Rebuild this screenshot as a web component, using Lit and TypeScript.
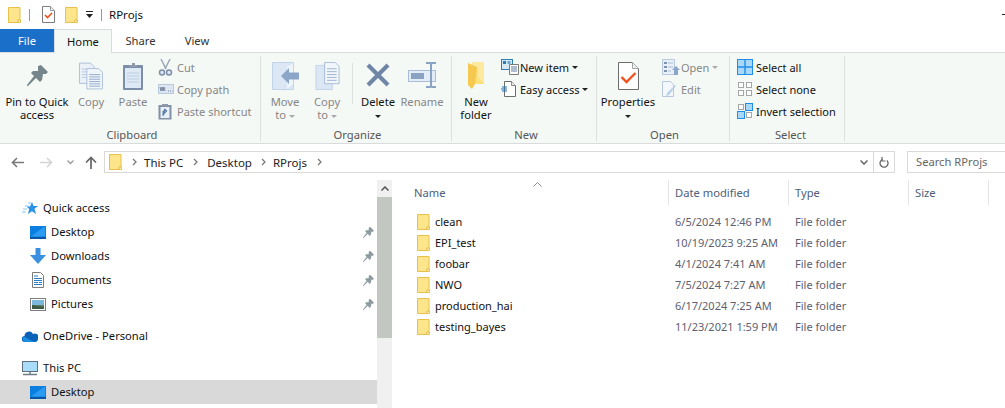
import { LitElement, html, css } from 'lit';
import { customElement } from 'lit/decorators.js';

// icons, drawn on the pixel sizes used in the ribbon
const folderPlain = (w = 13, h = 16) => html`<svg width=${w} height=${h} viewBox="0 0 13 16">
  <path d="M.5.5h11.5v12.5h-2v2.5H.5z" fill="#fde58c" stroke="#e8c04c"/>
  <path d="M10 13h2.500v2.500H10z" fill="#fff3c0" stroke="#e8c04c"/>
</svg>`;

const propsSmall = html`<svg width="13" height="17" viewBox="0 0 13 17">
  <path d="M.5.5h8l4 4v12H.5z" fill="#fff" stroke="#7d7d7d"/>
  <path d="M8.500.5v4h4" fill="#eee" stroke="#9a9a9a"/>
  <path d="M3 9l2.500 2.500L10 7" fill="none" stroke="#e8501a" stroke-width="1.600"/>
</svg>`;

const pinShape = (fill: string, size: number) => html`<svg width=${size} height=${size} viewBox="0 0 21 21">
  <path d="M11 1L14 0l7 7-2 2h-3l-1 6-2 2-4-4-8 8H0v-1l7-9-3-3 2-2h5z" fill=${fill}/>
</svg>`;

const copyIcon = html`<svg width="24" height="28" viewBox="0 0 26 29">
  <path d="M.5.5h12l4 4v18H.5z" fill="#eaf1f9" stroke="#a9bdd6"/>
  <path d="M3 7h11M3 10h11M3 13h11M3 16h11" stroke="#b9c9dd"/>
  <path d="M8.500 6.500h13l4 4v18h-17z" fill="#f1f6fb" stroke="#a9bdd6"/>
  <path d="M11 13h12M11 15.500h12M11 18h12M11 20.500h12M11 23h12M11 25.500h12" stroke="#8ea6c6"/>
</svg>`;

const pasteIcon = html`<svg width="22" height="29" viewBox="0 0 22 29">
  <rect x="1" y="3" width="20" height="25" rx="1" fill="#7d8ea8"/>
  <rect x="3" y="6" width="16" height="20" fill="#dfe9f5"/>
  <path d="M5 11h12M5 14h12M5 17h12M5 20h12" stroke="#bccde2"/>
  <path d="M7 5V3h3V1h3v2h2v2z" fill="#8f9aac"/>
</svg>`;

const cutIcon = html`<svg width="15" height="17" viewBox="0 0 15 17">
  <path d="M3 0l5 10M12 0L7 10" stroke="#9aa6b6" stroke-width="1.500" fill="none"/>
  <circle cx="4" cy="13.500" r="2.500" fill="#dfe9f5" stroke="#7d8ea8" stroke-width="1.500"/>
  <circle cx="11" cy="13.500" r="2.500" fill="#dfe9f5" stroke="#7d8ea8" stroke-width="1.500"/>
</svg>`;

const copyPathIcon = html`<svg width="16" height="10" viewBox="0 0 16 10">
  <rect x=".5" y=".5" width="15" height="9" fill="#dde7f3" stroke="#b9c9dd"/>
  <path d="M2 3l1 4 1-4 1 4 1-4 1 4M10 7h1M12 7h1M14 7h.5" stroke="#5f6f86" fill="none" stroke-width=".8"/>
</svg>`;

const pasteShortcutIcon = html`<svg width="14" height="17" viewBox="0 0 14 17">
  <rect x=".5" y="2" width="13" height="14.500" fill="#8391a6"/>
  <rect x="2.500" y="4" width="9" height="11" fill="#e8eff8"/>
  <path d="M4 1h6v2H4z" fill="#8f9aac"/>
  <path d="M5 13V8h4M6.500 6v4L9 8z" fill="#5f7fa8" stroke="#5f7fa8"/>
</svg>`;

const moveIcon = html`<svg width="27" height="28" viewBox="0 0 27 28">
  <path d="M.5.5h21v27H.5z" fill="#dce7f5" stroke="#c3d3e8"/>
  <path d="M21 1l-6 4v22l6-5z" fill="#eef4fb"/>
  <path d="M27 10.500H17V6L9 14l8 8v-4.500h10z" fill="#8ba6c9"/>
</svg>`;

const copyToIcon = html`<svg width="25" height="28" viewBox="0 0 25 29">
  <path d="M.5 3.500h17v25H.5z" fill="#dce7f5" stroke="#c3d3e8"/>
  <path d="M9.500.5h11l4 4v18h-15z" fill="#f1f6fb" stroke="#a9bdd6"/>
  <path d="M12 7h10M12 10h10M12 13h10M12 16h10M12 19h10" stroke="#a0b4cf"/>
</svg>`;

const deleteIcon = html`<svg width="26" height="26" viewBox="0 0 26 26">
  <path d="M3 3l20 20M23 3L3 23" stroke="#6f86a6" stroke-width="4.200" fill="none"/>
</svg>`;

const renameIcon = html`<svg width="29" height="26" viewBox="0 0 29 26">
  <rect x=".5" y="8.500" width="27" height="11" fill="#e3edf8" stroke="#a9bdd6"/>
  <rect x="3" y="11" width="13" height="6" fill="#8ba3c2"/>
  <path d="M18 1h4l1 1 1-1h4M18 25h4l1-1 1 1h4M23 2v22" stroke="#8ba3c2" stroke-width="2" fill="none"/>
</svg>`;

const newFolderIcon = html`<svg width="17" height="27" viewBox="0 0 17 27">
  <path d="M4 0h12v22H4z" fill="#fde9a0"/>
  <path d="M0 1l9 4 1 11 6 6H7l-3 5-4-4z" fill="#f5c850"/>
  <path d="M9 5l1 11 6 6H7z" fill="#fde07a"/>
</svg>`;

const newItemIcon = html`<svg width="18" height="16" viewBox="0 0 18 16">
  <rect x=".5" y=".5" width="11" height="10" fill="#d7e8f5" stroke="#2d7fb0"/>
  <rect x="2" y="2" width="3" height="3" fill="#2d7fb0"/>
  <rect x="6.500" y="2" width="3" height="3" fill="#6ea8c9"/>
  <path d="M8.500 5.500h9v10h-9z" fill="#fff" stroke="#7a7a7a"/>
  <path d="M10 8h6M10 10h6M10 12h6" stroke="#5c7da0"/>
</svg>`;

const easyAccessIcon = html`<svg width="15" height="16" viewBox="0 0 15 16">
  <path d="M3.500.5h7l4 4v11h-11z" fill="#fff" stroke="#6d6d6d"/>
  <path d="M10.500.5v4h4" fill="#eee" stroke="#8a8a8a"/>
  <path d="M1 6h5M0 8h6M1 10h5" stroke="#1f6eb4"/>
</svg>`;

const propertiesIcon = html`<svg width="21" height="28" viewBox="0 0 21 28">
  <path d="M.5.5h14l6 6v21H.5z" fill="#fff" stroke="#6d6d6d"/>
  <path d="M14.500.5v6h6" fill="#eee" stroke="#a5a5a5"/>
  <path d="M3.500 15l5 5 9-9" fill="none" stroke="#f0521b" stroke-width="2.400"/>
</svg>`;

const openIcon = html`<svg width="18" height="16" viewBox="0 0 18 16">
  <path d="M.5.5h12v15H.5z" fill="#e9f0f8" stroke="#b9c9dd"/>
  <path d="M2 3h3v2H2zM2 7h3v2H2zM2 11h3v2H2z" fill="#7d93b2"/>
  <path d="M6 4h5M6 8h5M6 12h3" stroke="#a9bdd6"/>
  <path d="M14 7l4 4h-2v5h-4v-5h-2z" fill="#8ba6c9"/>
</svg>`;

const editIcon = html`<svg width="14" height="16" viewBox="0 0 14 16">
  <path d="M.5.5h8l3 3v12h-11z" fill="#f4f8fc" stroke="#b9c9dd"/>
  <path d="M13 4l1 1-7 9-3 1 1-3z" fill="#b9d2ea"/>
</svg>`;

const selectAll = html`<svg width="16" height="16" viewBox="0 0 16 16">
  <rect x=".5" y=".5" width="15" height="15" fill="#a9d8f8" stroke="#1f8ee8"/>
  <path d="M8 0v16M0 8h16" stroke="#1f8ee8" stroke-width="1.400"/>
</svg>`;

const selectNone = html`<svg width="16" height="16" viewBox="0 0 16 16">
  <g fill="#fff" stroke="#a6a6a6"><rect x="1.500" y="1.500" width="5" height="5"/><rect x="9.500" y="1.500" width="5" height="5"/>
  <rect x="1.500" y="9.500" width="5" height="5"/><rect x="9.500" y="9.500" width="5" height="5"/></g>
</svg>`;

const selectInvert = html`<svg width="16" height="16" viewBox="0 0 16 16">
  <g fill="#fff" stroke="#a6a6a6"><rect x="1.500" y="1.500" width="5" height="5"/><rect x="9.500" y="9.500" width="5" height="5"/></g>
  <g fill="#a9d8f8" stroke="#1f8ee8"><rect x=".5" y="8.500" width="7" height="7"/><rect x="8.500" y=".5" width="7" height="7"/></g>
</svg>`;

const chevron = html`<svg width="5" height="8" viewBox="0 0 5 8"><path d="M1 1l3 3-3 3" fill="none" stroke="#7a7a7a" stroke-width="1.300"/></svg>`;

const quickAccess = html`<svg width="16" height="14" viewBox="0 0 16 14">
  <path d="M10 1l1.500 4H16l-3.500 2.800L14 13l-4-2.800L6 13l1.200-5L4.500 5.500H8z" fill="#2a93e6"/>
  <path d="M6 2h3M3 5h4M1 8h4M0 11h4" stroke="#8cc8f2"/>
</svg>`;

const desktopIcon = html`<svg width="16" height="13" viewBox="0 0 16 13">
  <rect width="16" height="11.500" fill="#0a7fe0"/>
  <path d="M1 10.500L14 1h1v9.500z" fill="#2b9cf2"/>
  <rect y="11" width="16" height="2" fill="#0759a8"/>
</svg>`;

const downloadsIcon = html`<svg width="16" height="16" viewBox="0 0 16 16">
  <path d="M5.500 0h5v7H16l-8 9-8-9h5.500z" fill="#3a8fe0"/>
</svg>`;

const documentsIcon = html`<svg width="12" height="16" viewBox="0 0 12 16">
  <path d="M.5.500h8l3 3v12H.5z" fill="#fff" stroke="#7d7d7d"/>
  <path d="M2 4h4M2 6.500h8M2 8.500h8M2 10.500h4M7 10.500h3M2 12.500h8" stroke="#2a7fc9"/>
</svg>`;

const picturesIcon = html`<svg width="16" height="13" viewBox="0 0 16 13">
  <rect x=".5" y=".5" width="15" height="12" fill="#fff" stroke="#7d7d7d"/>
  <rect x="2" y="2" width="12" height="5" fill="#7cb7e0"/>
  <rect x="2" y="7" width="12" height="4" fill="#5f7d5f"/>
  <path d="M2 7l5 1 7 1v2H2z" fill="#3d5a44"/>
</svg>`;

const oneDrive = html`<svg width="16" height="11" viewBox="0 0 16 11">
  <path d="M3 11a3 3 0 0 1-.5-6A4.500 4.500 0 0 1 11 3a3.500 3.500 0 0 1 5 4.500c0 2-1 3.500-3 3.500z" fill="#0a62b8"/>
  <path d="M3 11a3 3 0 0 1-1-5.500L8 9l5 2z" fill="#1b8fe3"/>
</svg>`;

const thisPc = html`<svg width="16" height="15" viewBox="0 0 16 15">
  <rect x=".5" y=".5" width="15" height="10" fill="#a9dcf8" stroke="#5c7080"/>
  <path d="M7 11h2v2H7z" fill="#8a9aa6"/>
  <path d="M1 13.500h14" stroke="#6d7d88" stroke-width="1.500"/>
</svg>`;

@customElement('app-root')
export class AppRoot extends LitElement {
  static styles = css`
    :host {
      display: block;
      width: 1005px;
      height: 408px;
      overflow: hidden;
      background: #fff;
      font-family: 'Noto Sans', sans-serif;
      font-size: 11.2px;
      color: #111;
    }
    svg { display: block; flex: none; }

    .titlebar { display: flex; align-items: center; height: 29px; padding-left: 8px; }
    .titlebar .bar { width: 1px; height: 12px; background: #9a9a9a; }
    .titlebar .title { font-size: 11.5px; }
    .dash { width: 3px; height: 1px; margin-left: auto; background: #222; }
    .drop { width: 7px; height: 7px; display: block; }
    .sp { width: 10px; }

    .tabs { display: flex; height: 24px; position: relative; }
    .tab { display: flex; align-items: center; justify-content: center; height: 23px; color: #333; }
    .tab.file-tab { width: 54px; background: #1a6fc9; color: #fff; }
    .tab.home { width: 58px; height: 24px; box-sizing: border-box; background: #f5f9f6; border: 1px solid #dadbdc; border-bottom: none; position: relative; z-index: 1; color: #111; }
    .tab.share { width: 57px; }
    .tab.view { width: 56px; }

    .ribbon { display: flex; height: 92px; box-sizing: border-box; background: #f5f9f6; border-top: 1px solid #dadbdc; border-bottom: 1px solid #dadbdc; margin-top: -1px; }
    .group { display: flex; flex-direction: column; box-sizing: border-box; border-right: 1px solid #dde1de; margin: 3px 0 2px; }
    .group .content { display: flex; flex: 1; }
    .group .label { text-align: center; height: 13px; line-height: 13px; color: #555; }
    .big { display: flex; flex-direction: column; align-items: center; line-height: 13px; text-align: center; color: #111; }
    .big .ic { height: 33px; margin-top: 6px; display: flex; align-items: flex-start; justify-content: center; }
    .big .ic.pinned { padding-top: 3px; height: 30px; }
    .big.off { color: #868686; }
    .col { display: flex; flex-direction: column; }
    .small { display: flex; align-items: center; height: 22px; white-space: nowrap; color: #111; font-size: 11px; }
    .small.off { color: #868686; }
    .small .sic { width: 19px; display: flex; align-items: center; }
    .caret { display: inline-block; width: 0; height: 0; border: 3px solid transparent; border-top: 3px solid #222; border-bottom: none; vertical-align: middle; }
    .caret.off-c { border-top-color: #aaa; }
    .vsep { width: 1px; background: #dde1de; margin: 7px 4px 24px 4px; }

    .navbar { display: flex; align-items: center; height: 22px; margin-top: 7px; }
    .arrows { display: flex; align-items: center; width: 104px; flex: none; }
    .address { display: flex; align-items: center; width: 791px; height: 22px; box-sizing: border-box; border: 1px solid #d9d9d9; }
    .crumb { color: #222; font-size: 11.5px; }
    .address .end { margin-left: auto; display: flex; align-items: center; height: 100%; }
    .address .refresh { width: 20px; height: 100%; border-left: 1px solid #d9d9d9; display: flex; align-items: center; justify-content: center; }
    .search { flex: 1; margin-left: 12px; height: 22px; box-sizing: border-box; border: 1px solid #d9d9d9; border-right: none; padding-left: 8px; line-height: 19px; color: #666; }

    .body { display: flex; margin-top: 7px; height: 228px; }
    .nav { width: 377px; flex: none; padding-top: 16px; box-sizing: border-box; }
    .row { display: flex; align-items: center; height: 24px; }
    .row .nic { width: 16px; margin-right: 5px; display: flex; justify-content: center; }
    .row .txt { margin-bottom: 2px; }
    .row.l1 { padding-left: 22px; }
    .row.l2 { padding-left: 30px; }
    .row.gap { margin-top: 8px; }
    .row .pin { margin-left: auto; margin-right: 3px; }
    .row.sel { background: #d9d9d9; }

    .scroll { width: 15px; flex: none; background: #f0f0f0; display: flex; flex-direction: column; }
    .scroll .up { height: 17px; display: flex; align-items: center; justify-content: center; }
    .scroll .thumb { height: 141px; background: #c2c7c2; }

    .list { flex: 1; position: relative; }
    .sort { position: absolute; left: 141px; top: 2px; }
    .head { display: grid; grid-template-columns: 277px 120px 120px 80px; height: 25px; margin-bottom: 6px; }
    .head div { border-right: 1px solid #e5e5e5; color: #4c607a; line-height: 25px; padding-left: 6px; }
    .head div:first-child { padding-left: 22px; }
    .file-row { display: grid; grid-template-columns: 277px 120px 120px; height: 21px; align-items: center; font-size: 11px; }
    .file-row .fname { display: flex; align-items: center; padding-left: 25px; color: #111; }
    .file-row .fname svg { margin-right: 5px; }
    .file-row .meta { padding-left: 6px; color: #606070; }
  `;

  private folders = [
    ['clean', '6/5/2024 12:46 PM'],
    ['EPI_test', '10/19/2023 9:25 AM'],
    ['foobar', '4/1/2024 7:41 AM'],
    ['NWO', '7/5/2024 7:27 AM'],
    ['production_hai', '6/17/2024 7:25 AM'],
    ['testing_bayes', '11/23/2021 1:59 PM'],
  ];

  private renderTitlebar() {
    return html`<div class="titlebar">
      ${folderPlain()}
      <span class="bar" style="margin:0 12px 0 8px"></span>
      ${propsSmall}
      <span class="sp"></span>
      ${folderPlain()}
      <svg class="drop" style="margin:0 8px 0 8px" viewBox="0 0 7 7"><path d="M0 0h7v1H0zM0 3h7L3.500 7z" fill="#222"/></svg>
      <span class="bar" style="margin-right:7px"></span>
      <span class="title">RProjs</span>
      <span class="dash"></span>
    </div>`;
  }

  private renderTabs() {
    return html`<div class="tabs">
      <div class="tab file-tab">File</div>
      <div class="tab home">Home</div>
      <div class="tab share">Share</div>
      <div class="tab view">View</div>
    </div>`;
  }

  private big(icon: unknown, label: unknown, width: number, off = false, icClass = '') {
    return html`<div class="big ${off ? 'off' : ''}" style="width:${width}px">
      <div class="ic ${icClass}">${icon}</div>
      <div>${label}</div>
    </div>`;
  }

  private small(icon: unknown, label: unknown, off = false) {
    return html`<div class="small ${off ? 'off' : ''}"><span class="sic">${icon}</span>${label}</div>`;
  }

  private renderRibbon() {
    const caret = html`<span class="caret"></span>`;
    const caretOff = html`<span class="caret off-c"></span>`;
    return html`<div class="ribbon">
      <div class="group" style="width:261px;padding-left:4px">
        <div class="content">
          ${this.big(pinShape('#75858a', 21), html`Pin to Quick<br />access`, 66, false, 'pinned')}
          ${this.big(copyIcon, 'Copy', 42, true)}
          ${this.big(pasteIcon, 'Paste', 42, true)}
          <div class="col" style="margin-left:4px">
            ${this.small(cutIcon, 'Cut', true)}
            ${this.small(copyPathIcon, 'Copy path', true)}
            ${this.small(pasteShortcutIcon, 'Paste shortcut', true)}
          </div>
        </div>
        <div class="label">Clipboard</div>
      </div>
      <div class="group" style="width:191px;padding-left:3px">
        <div class="content">
          ${this.big(moveIcon, html`Move<br />to ${caretOff}`, 42, true)}
          ${this.big(copyToIcon, html`Copy<br />to ${caretOff}`, 42, true)}
          <div class="vsep"></div>
          ${this.big(deleteIcon, html`Delete<br />${caret}`, 42)}
          ${this.big(renameIcon, 'Rename', 46, true)}
        </div>
        <div class="label">Organize</div>
      </div>
      <div class="group" style="width:145px;padding-left:4px">
        <div class="content">
          ${this.big(newFolderIcon, html`New<br />folder`, 40)}
          <div class="col" style="margin-left:5px">
            ${this.small(newItemIcon, html`New item&nbsp;${caret}`)}
            ${this.small(easyAccessIcon, html`Easy access&nbsp;${caret}`)}
          </div>
        </div>
        <div class="label">New</div>
      </div>
      <div class="group" style="width:133px;padding-left:3px">
        <div class="content">
          ${this.big(propertiesIcon, html`Properties<br />${caret}`, 56)}
          <div class="col" style="margin-left:6px">
            ${this.small(openIcon, html`Open&nbsp;${caretOff}`, true)}
            ${this.small(editIcon, 'Edit', true)}
          </div>
        </div>
        <div class="label">Open</div>
      </div>
      <div class="group" style="width:115px;padding-left:7px">
        <div class="content">
          <div class="col">
            ${this.small(selectAll, 'Select all')}
            ${this.small(selectNone, 'Select none')}
            ${this.small(selectInvert, 'Invert selection')}
          </div>
        </div>
        <div class="label">Select</div>
      </div>
    </div>`;
  }

  private renderNavbar() {
    return html`<div class="navbar">
      <div class="arrows">
        <svg style="margin-left:11px" width="13" height="11" viewBox="0 0 13 11"><path d="M13 5.500H2M6 1L1.500 5.500 6 10" fill="none" stroke="#7a7a7a" stroke-width="1.600"/></svg>
        <svg style="margin-left:16px" width="13" height="11" viewBox="0 0 13 11"><path d="M0 5.500h11M7 1l4.500 4.500L7 10" fill="none" stroke="#d4d4d4" stroke-width="1.600"/></svg>
        <svg style="margin-left:14px" width="7" height="5" viewBox="0 0 7 5"><path d="M.5.500l3 3 3-3" fill="none" stroke="#9a9a9a" stroke-width="1.300"/></svg>
        <svg style="margin-left:11px" width="12" height="13" viewBox="0 0 12 13"><path d="M6 13V2M1 6.500L6 1.500l5 5" fill="none" stroke="#666" stroke-width="1.700"/></svg>
      </div>
      <div class="address">
        <span style="margin-left:4px;margin-right:10px;display:flex">${folderPlain()}</span>
        ${chevron}<span class="crumb" style="margin:0 10px 0 7px">This PC</span>
        ${chevron}<span class="crumb" style="margin:0 9px 0 9px">Desktop</span>
        ${chevron}<span class="crumb" style="margin:0 10px 0 7px">RProjs</span>
        ${chevron}
        <div class="end">
          <svg style="margin-right:5px" width="8" height="5" viewBox="0 0 8 5"><path d="M.5.500L4 4 7.500.500" fill="none" stroke="#666" stroke-width="1.500"/></svg>
          <div class="refresh"><svg width="10" height="11" viewBox="0 0 10 11"><path d="M3.500 2.500A4 4 0 1 0 8 3.500" fill="none" stroke="#666" stroke-width="1.300"/><path d="M3 0v4h3.500" fill="none" stroke="#666" stroke-width="1.200"/></svg></div>
        </div>
      </div>
      <div class="search">Search RProjs</div>
    </div>`;
  }

  private renderNav() {
    const pin = html`<span class="pin">${pinShape('#8b9a9e', 11)}</span>`;
    const label = (text: string) => html`<span class="txt">${text}</span>`;
    return html`<div class="nav">
      <div class="row l1"><span class="nic">${quickAccess}</span>${label('Quick access')}</div>
      <div class="row l2"><span class="nic">${desktopIcon}</span>${label('Desktop')}${pin}</div>
      <div class="row l2"><span class="nic">${downloadsIcon}</span>${label('Downloads')}${pin}</div>
      <div class="row l2"><span class="nic">${documentsIcon}</span>${label('Documents')}${pin}</div>
      <div class="row l2"><span class="nic">${picturesIcon}</span>${label('Pictures')}${pin}</div>
      <div class="row l1 gap"><span class="nic">${oneDrive}</span>${label('OneDrive - Personal')}</div>
      <div class="row l1 gap"><span class="nic">${thisPc}</span>${label('This PC')}</div>
      <div class="row l2 sel"><span class="nic">${desktopIcon}</span>${label('Desktop')}</div>
    </div>`;
  }

  private renderList() {
    return html`<div class="list">
      <svg class="sort" width="9" height="5" viewBox="0 0 9 5"><path d="M.5 4.500l4-4 4 4" fill="none" stroke="#8a8a8a"/></svg>
      <div class="head">
        <div>Name</div><div>Date modified</div><div>Type</div><div>Size</div>
      </div>
      ${this.folders.map(
        ([name, date]) => html`<div class="file-row">
          <div class="fname">${folderPlain()}${name}</div>
          <div class="meta">${date}</div>
          <div class="meta">File folder</div>
        </div>`
      )}
    </div>`;
  }

  render() {
    return html`
      ${this.renderTitlebar()}
      ${this.renderTabs()}
      ${this.renderRibbon()}
      ${this.renderNavbar()}
      <div class="body">
        ${this.renderNav()}
        <div class="scroll">
          <div class="up"><svg width="8" height="5" viewBox="0 0 8 5"><path d="M.5 4.500L4 1l3.500 3.500" fill="none" stroke="#555" stroke-width="1.500"/></svg></div>
          <div class="thumb"></div>
        </div>
        ${this.renderList()}
      </div>
    `;
  }
}
